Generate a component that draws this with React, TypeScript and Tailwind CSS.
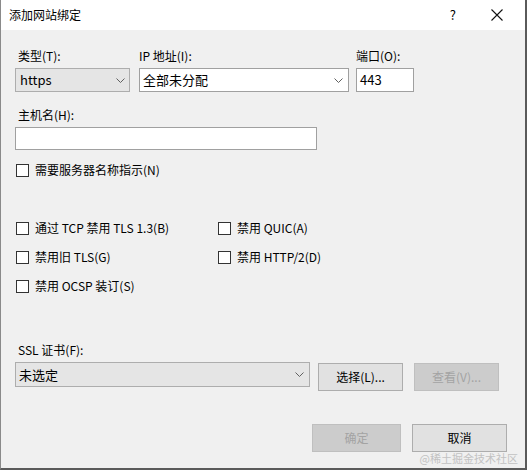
import React from "react";

const Chevron = () => (
  <svg width="9" height="5" viewBox="0 0 9 5" className="shrink-0">
    <path d="M0.5 0.5 L4.5 4.5 L8.5 0.5" fill="none" stroke="#606060" strokeWidth="1" />
  </svg>
);

const Check = ({ label }: { label: string }) => (
  <div className="flex h-[16px] items-center">
    <div className="h-[13px] w-[13px] shrink-0 border border-[#333333] bg-white" />
    <span className="ml-[6px] leading-[16px]">{label}</span>
  </div>
);

export default function App() {
  return (
    <div
      className="relative h-[470px] w-[527px] overflow-hidden border-b-2 border-l border-r-2 border-b-[#5a5a5a] border-l-[#8a8a8a] border-r-[#5a5a5a] bg-[#f0f0f0] text-[12px] text-black"
      style={{ fontFamily: '"Noto Sans CJK SC", "Noto Sans", sans-serif' }}
    >
      {/* title bar */}
      <div className="flex h-[30px] items-center bg-white pl-[8px]">
        <span className="leading-[16px]">添加网站绑定</span>
        <span className="ml-auto mr-[35px] text-[13px] leading-[16px]">?</span>
        <svg width="12" height="12" viewBox="0 0 12 12" className="mr-[22px]">
          <path d="M0.5 0.5 L11.5 11.5 M11.5 0.5 L0.5 11.5" stroke="#111" strokeWidth="1.1" />
        </svg>
      </div>

      <div className="flex flex-col pl-[14px]">
        {/* top row */}
        <div className="mt-[18px] flex">
          <div className="flex w-[115px] flex-col">
            <span className="mb-[4px] h-[16px] pl-[3px] leading-[16px]">类型(T):</span>
            <div className="flex h-[24px] items-center border border-[#adadad] bg-[#e5e5e5] pl-[4px] pr-[4px]">
              <span className="text-[13px]">https</span>
              <span className="ml-auto"><Chevron /></span>
            </div>
          </div>
          <div className="ml-[9px] flex w-[210px] flex-col">
            <span className="mb-[4px] h-[16px] leading-[16px]">IP 地址(I):</span>
            <div className="flex h-[24px] items-center border border-[#a0a0a0] bg-white pl-[3px] pr-[5px]">
              <span className="text-[13px]">全部未分配</span>
              <span className="ml-auto"><Chevron /></span>
            </div>
          </div>
          <div className="ml-[7px] flex w-[58px] flex-col">
            <span className="mb-[4px] h-[16px] leading-[16px]">端口(O):</span>
            <div className="flex h-[24px] items-center border border-[#a0a0a0] bg-white pl-[3px]">
              <span className="text-[13px]">443</span>
            </div>
          </div>
        </div>

        {/* host name */}
        <span className="mt-[15px] h-[16px] pl-[3px] leading-[16px]">主机名(H):</span>
        <div className="mt-[4px] h-[23px] w-[302px] border border-[#a0a0a0] bg-white" />

        <div className="mt-[12px] pl-[1px]">
          <Check label="需要服务器名称指示(N)" />
        </div>

        {/* options */}
        <div className="mt-[42px] grid grid-cols-[202px_1fr] gap-y-[13px] pl-[1px]">
          <Check label="通过 TCP 禁用 TLS 1.3(B)" />
          <Check label="禁用 QUIC(A)" />
          <Check label="禁用旧 TLS(G)" />
          <Check label="禁用 HTTP/2(D)" />
          <Check label="禁用 OCSP 装订(S)" />
        </div>

        {/* SSL */}
        <span className="mt-[48px] h-[16px] pl-[3px] leading-[16px]">SSL 证书(F):</span>
        <div className="mt-[4px] flex items-start">
          <div className="flex h-[25px] w-[295px] items-center border border-[#adadad] bg-[#e5e5e5] pl-[3px] pr-[5px]">
            <span className="text-[13px]">未选定</span>
            <span className="ml-auto"><Chevron /></span>
          </div>
          <div className="ml-[8px] mt-[1px] flex h-[28px] w-[85px] items-center justify-center border border-[#adadad] bg-[#e1e1e1]">
            选择(L)...
          </div>
          <div className="ml-[11px] mt-[1px] flex h-[28px] w-[85px] items-center justify-center border border-[#bfbfbf] bg-[#cccccc] text-[#a3a3a3]">
            查看(V)...
          </div>
        </div>

        {/* bottom buttons */}
        <div className="mt-[33px] flex justify-end pr-[18px]">
          <div className="flex h-[28px] w-[89px] items-center justify-center border border-[#bfbfbf] bg-[#cccccc] text-[#a3a3a3]">
            确定
          </div>
          <div className="ml-[11px] flex h-[28px] w-[95px] items-center justify-center border border-[#adadad] bg-[#e1e1e1]">
            取消
          </div>
        </div>
      </div>

      <span className="absolute bottom-[3px] right-[7px] text-[11px] leading-[14px] text-[#c2c2c2]">
        @稀土掘金技术社区
      </span>
    </div>
  );
}
